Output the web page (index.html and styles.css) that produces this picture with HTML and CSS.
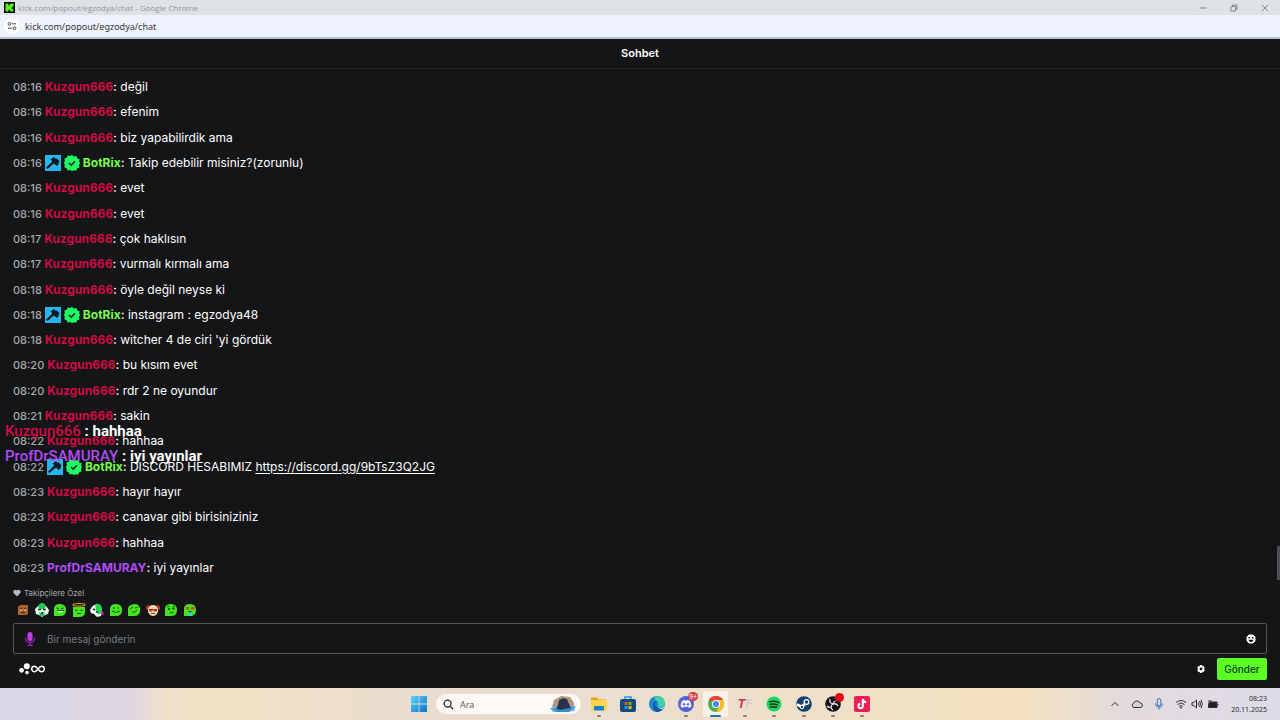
FILE: index.html
```html
<!DOCTYPE html>
<html lang="tr">

<head>
  <meta charset="UTF-8">
  <meta name="viewport" content="width=device-width, initial-scale=1.0">
  <title>kick.com/popout/egzodya/chat</title>
  <link rel="stylesheet" href="styles.css">
</head>

<body>
  <svg class="sprite">
    <symbol id="hammer" viewBox="0 0 16 16">
      <path fill="#27b5ef" d="M0 0h16v16H0z" />
      <path fill="#101b20" d="M5.500 4.500L9 2l1.500 1.800L12 3.500l2.500 3-1 1 .5 1.500-2.500 2-2-2.300-1.200.3-5.800 5L1 12.500 6.800 7l.2-1.200z" />
    </symbol>
    <symbol id="verified" viewBox="0 0 16 16">
      <path fill="#1efb65" d="M8 0l2 1.500 2.400-.4.9 2.300 2.300.9-.4 2.300L16 8l-1 2 .5 2.400-2.300.9-.9 2.300-2.300-.3L8 16l-2-.9-2.400.4-.9-2.300-2.300-.9.4-2.300L0 8l.9-2-.5-2.400 2.300-.8.9-2.300L6 1z" />
      <path fill="none" stroke="#101b20" stroke-width="1.600" d="M5 8l2.200 2.200L11 6.200" />
    </symbol>
  </svg>

  <div class="titlebar">
    <svg class="favicon" viewBox="0 0 11 11">
      <path d="M0 0h11v11H0z" />
      <path fill="#53fc18" d="M1.500 1.500h3V3.500h1V2.500h1v-1h3v3h-1v1h-1v1h1v1h1v2h-3v-1h-1v-1h-1v2h-3z" />
    </svg>
    <span class="title">kick.com/popout/egzodya/chat - Google Chrome</span>
    <div class="window-btns">
      <button aria-label="Simge durumuna küçült"><svg viewBox="0 0 8 8"><path d="M.5 4h7" /></svg></button>
      <button aria-label="Geri yükle"><svg viewBox="0 0 8 8"><path d="M1 2.500h4.500V7H1zM2.500 2.300V1H7v4.500H5.700" /></svg></button>
      <button aria-label="Kapat"><svg viewBox="0 0 8 8"><path d="M.8.8l6.400 6.400M7.200.8L.8 7.200" /></svg></button>
    </div>
  </div>
  <div class="urlbar">
    <span class="site-info">
      <svg viewBox="0 0 10 10"><circle cx="2.500" cy="2.800" r="1.400" /><path d="M5 2.800h4M1 7.200h4" /><circle cx="7.500" cy="7.200" r="1.400" /></svg>
    </span>
    <span>kick.com/popout/egzodya/chat</span>
  </div>

  <main class="chat">
    <h1 class="chat-header">Sohbet</h1>
    <div class="messages">
      <p class="msg"><time>08:16</time><b class="red">Kuzgun666</b><i>:</i> değil</p>
      <p class="msg"><time>08:16</time><b class="red">Kuzgun666</b><i>:</i> efenim</p>
      <p class="msg"><time>08:16</time><b class="red">Kuzgun666</b><i>:</i> biz yapabilirdik ama</p>
      <p class="msg"><time>08:16</time><svg class="badge"><use href="#hammer" /></svg><svg class="badge"><use href="#verified" /></svg><b class="green">BotRix</b><i>:</i> Takip edebilir misiniz?(zorunlu)</p>
      <p class="msg"><time>08:16</time><b class="red">Kuzgun666</b><i>:</i> evet</p>
      <p class="msg"><time>08:16</time><b class="red">Kuzgun666</b><i>:</i> evet</p>
      <p class="msg"><time>08:17</time><b class="red">Kuzgun666</b><i>:</i> çok haklısın</p>
      <p class="msg"><time>08:17</time><b class="red">Kuzgun666</b><i>:</i> vurmalı kırmalı ama</p>
      <p class="msg"><time>08:18</time><b class="red">Kuzgun666</b><i>:</i> öyle değil neyse ki</p>
      <p class="msg"><time>08:18</time><svg class="badge"><use href="#hammer" /></svg><svg class="badge"><use href="#verified" /></svg><b class="green">BotRix</b><i>:</i> instagram : egzodya48</p>
      <p class="msg"><time>08:18</time><b class="red">Kuzgun666</b><i>:</i> witcher 4 de ciri 'yi gördük</p>
      <p class="msg"><time>08:20</time><b class="red">Kuzgun666</b><i>:</i> bu kısım evet</p>
      <p class="msg"><time>08:20</time><b class="red">Kuzgun666</b><i>:</i> rdr 2 ne oyundur</p>
      <p class="msg"><time>08:21</time><b class="red">Kuzgun666</b><i>:</i> sakin</p>
      <p class="msg"><time>08:22</time><b class="red">Kuzgun666</b><i>:</i> hahhaa</p>
      <p class="msg"><time>08:22</time><svg class="badge"><use href="#hammer" /></svg><svg class="badge"><use href="#verified" /></svg><b class="green">BotRix</b><i>:</i> DISCORD HESABIMIZ <a href="https://discord.gg/9bTsZ3Q2JG">https://discord.gg/9bTsZ3Q2JG</a></p>
      <p class="msg"><time>08:23</time><b class="red">Kuzgun666</b><i>:</i> hayır hayır</p>
      <p class="msg"><time>08:23</time><b class="red">Kuzgun666</b><i>:</i> canavar gibi birisiniziniz</p>
      <p class="msg"><time>08:23</time><b class="red">Kuzgun666</b><i>:</i> hahhaa</p>
      <p class="msg"><time>08:23</time><b class="purple">ProfDrSAMURAY</b><i>:</i> iyi yayınlar</p>
      <span class="scroll-thumb"></span>
    </div>

    <!-- stream overlay, floats over the chat -->
    <div class="overlay">
      <p><span class="red">Kuzgun666</span> : hahhaa</p>
      <p><span class="purple">ProfDrSAMURAY</span> : iyi yayınlar</p>
    </div>

    <div class="chat-footer">
      <div class="mode">
        <svg viewBox="0 0 8 8"><path fill="#b4b8ba" d="M4 7.500L.8 4.200C-.8 2 2 -.8 4 1.500 6-.8 8.800 2 7.200 4.200z" /></svg>
        Takipçilere Özel
      </div>
      <div class="emotes">
        <button aria-label="emote 1"><svg viewBox="0 0 14 14"><path fill="#a9652b" d="M2 4l2-2h8v9l-2 1H2z" /><path stroke="#3b1d0a" d="M4 5l2 1M10 5L8 6M5 9.500h4" /><path fill="#efd4b4" d="M4 6.500h2v1H4zM8 6.500h2v1H8z" /></svg></button>
        <button aria-label="emote 2"><svg viewBox="0 0 14 14"><path fill="#e9fbef" d="M0 6l3-3 4-2 4 2 3 4-1 4-3 1-3 2-3-2-3-1z" /><path fill="#22c758" d="M3 4q1-4 4-4t4 4L9 6H5zM4 9.500h6L9 13H5z" /><path stroke="#12351c" stroke-width="1.500" d="M3 6.500h3M8 6.500h3M6 10h2" /></svg></button>
        <button aria-label="emote 3"><svg viewBox="0 0 14 14"><path fill="#45e51d" d="M1 13V6q0-5 6-5t6 6-6 6z" /><path fill="#d8ffd0" d="M4 7.500h7q-1 2-3.500 2T4 7.500z" /><path stroke="#14570a" d="M3 5l3 .5M11 5L8 5.500M4 7.500h7" /></svg></button>
        <button aria-label="emote 4"><svg viewBox="0 0 14 14"><path fill="#45e51d" d="M1 4h12v5q0 5-6 5H1z" /><ellipse cx="7" cy="1.800" rx="6.500" ry="1.300" fill="none" stroke="#f5a623" /><path fill="none" stroke="#14570a" d="M3 7q1.500 1 3 0M8 7q1.500 1 3 0M5 10.500h4" /></svg></button>
        <button aria-label="emote 5"><svg viewBox="0 0 14 14"><path fill="#e9fbef" d="M0 7q1-3 4-5l5 0 3 5-1 6-4 1-3-3-3-1z" /><path fill="#22d458" d="M5 1q6-1 7 4v4q-2 3-4 2L6 7z" /><path stroke="#12351c" stroke-width="1.500" d="M3 6l2 1M6 9h2" /><path fill="#d12bb9" d="M11 9h2.500v3H11z" /></svg></button>
        <button aria-label="emote 6"><svg viewBox="0 0 14 14"><path fill="#45e51d" d="M1 13V6q0-5 6-5t6 6-6 6z" /><path fill="none" stroke="#14570a" d="M4 5h2M8 5h2M3 8q4 3 8 0" /></svg></button>
        <button aria-label="emote 7"><svg viewBox="0 0 14 14"><path fill="#45e51d" d="M1 13V6q0-3 3-4 7-3 9 3 1 8-6 8z" /><path fill="none" stroke="#14570a" d="M3 6l3-2M8 5l3-1M5 9q3 1 5-2" /></svg></button>
        <button aria-label="emote 8"><svg viewBox="0 0 14 14"><path fill="#f6dfb5" d="M2 4q5-4 10 0v5q-2 4-5 4T2 9z" /><path fill="#c73b23" d="M0 4l2-2 2 1-2 3-2 1zM14 4l-2-2-2 1 2 3 2 1zM3 6h3.500v2.500H3zM7.500 6H11v2.500H7.500z" /><path stroke="#a3271b" d="M3 6.500h8M5 10.500h4" /></svg></button>
        <button aria-label="emote 9"><svg viewBox="0 0 14 14"><path fill="#45e51d" d="M1 13V6q0-5 6-5t6 6-6 6z" /><circle cx="5" cy="6" r="1.200" fill="#14570a" /><circle cx="9.500" cy="5.500" r="1.200" fill="#14570a" /><path fill="none" stroke="#14570a" d="M3 4l2-1M9 3l2 .5M6 10q2-2 4 0" /></svg></button>
        <button aria-label="emote 10"><svg viewBox="0 0 14 14"><path fill="#45e51d" d="M1 13V6q0-5 6-5t6 6-6 6z" /><path fill="#d8402c" d="M3 4h3v2.500H3zM8 4h3.500v2.500H8z" /><path fill="#1c4f12" d="M5.500 8h3v1.500h-3z" /><path fill="#46c8f2" d="M6 9.500h3V13H6z" /></svg></button>
      </div>
      <div class="composer">
        <svg class="mic" viewBox="0 0 12 14"><rect x="3.500" y="0" width="5" height="9" rx="2.500" fill="#c13be5" /><path fill="none" stroke="#8c1fb0" stroke-width="1.400" d="M1.500 5.500q0 5 4.500 5t4.500-5M6 10.500V13M3.500 13.200h5" /></svg>
        <input type="text" aria-label="Mesaj" placeholder="Bir mesaj gönderin">
        <button aria-label="Emojiler"><svg viewBox="0 0 10 10"><path fill="#fff" d="M3 1h4l2 2v4L7 9H3L1 7V3z" stroke="#fff" stroke-linejoin="round" /><path fill="#141517" d="M2.500 3h1.600v1.500H2.500zM5.900 3h1.600v1.500H5.900zM2.500 5.700h5Q7 8 5 8T2.500 5.700z" /></svg></button>
      </div>
      <div class="actions">
        <svg class="points" viewBox="0 0 12 12"><circle cx="7.800" cy="3.200" r="3" fill="#fff" /><circle cx="2.500" cy="7.300" r="2.400" fill="#fff" /><circle cx="8" cy="9.600" r="1.800" fill="#fff" /></svg>
        <svg class="infinity" viewBox="0 0 14 8"><path fill="none" stroke="#fff" stroke-width="1.500" d="M7 4C5.500 2 4.800 1.200 3.500 1.200a2.800 2.800 0 0 0 0 5.600C4.800 6.800 5.500 6 7 4s2.200-2.800 3.500-2.800a2.800 2.800 0 0 1 0 5.600C9.200 6.800 8.500 6 7 4z" /></svg>
        <button class="settings" aria-label="Ayarlar"><svg viewBox="0 0 10 10"><path fill="#fff" fill-rule="evenodd" d="M4 1h2l.4 1.200 1.200-.3 1.100 1.800L8 5l.7 1.300-1.100 1.800-1.200-.3L6 9H4l-.4-1.200-1.200.3-1.100-1.800L2 5l-.7-1.300 1.100-1.800 1.200.3zM5 3.600a1.400 1.400 0 1 0 0 2.800 1.400 1.400 0 0 0 0-2.800z" /></svg></button>
        <button class="send">Gönder</button>
      </div>
    </div>
  </main>

  <footer class="taskbar">
    <div class="dock">
      <button class="start" aria-label="Başlat"><svg viewBox="0 0 16 16"><defs><linearGradient id="win" x2="1" y2="1"><stop stop-color="#5fd2f7" /><stop offset="1" stop-color="#0873cd" /></linearGradient></defs><path fill="url(#win)" d="M0 0h7.600v7.600H0zM8.400 0H16v7.600H8.400zM0 8.400h7.600V16H0zM8.400 8.400H16V16H8.400z" /></svg></button>
      <label class="search">
        <svg class="lens" viewBox="0 0 12 12"><circle cx="5" cy="5" r="3.800" /><path d="M8 8l3 3.200" /></svg>
        <input type="text" aria-label="Ara" placeholder="Ara">
        <svg class="hat" viewBox="0 0 28 18"><path fill="#b4967c" d="M3 12L5 5l7-4 9 1 4 6v5z" /><path fill="#64b6e7" d="M1 13l8-2 10 1 8-1-2 5-9 1H4z" /><path fill="#263451" d="M7 14l2-4 1-5 4-2 4 1 2 5 2 4-7 3z" /><path fill="#3a89c6" d="M2 13l9 2 14-3-5 5H8z" /></svg>
      </label>
      <div class="apps">
        <button class="app open" aria-label="Dosya Gezgini"><svg viewBox="0 0 16 16"><path fill="#e3a31b" d="M0 1.500h6L8 3.500h7V8H0z" /><path fill="#ffd34d" d="M0 4h16v10.500H0z" /><path fill="#1780c8" d="M3 10h10v4.500H3z" /></svg></button>
        <button class="app" aria-label="Store"><svg viewBox="0 0 16 16"><path fill="none" stroke="#2196dd" stroke-width="1.500" d="M5 4V1h6v3" /><rect y="3" width="16" height="13" rx="2" fill="#144b7c" /><path fill="#f25022" d="M4.500 6h3v3h-3z" /><path fill="#7fba00" d="M8.500 6h3v3h-3z" /><path fill="#00a4ef" d="M4.500 10h3v3h-3z" /><path fill="#ffb900" d="M8.500 10h3v3h-3z" /></svg></button>
        <button class="app" aria-label="Edge"><svg viewBox="0 0 16 16"><circle cx="8" cy="8" r="8" fill="#168bd2" /><path fill="#3fd3a0" d="M5 1q8-3 11 6 0 4-4 4-3 0-3-2 1-2-1-4Q6 4 5 1z" /><path fill="#0c59a4" d="M4 9q0-4 4-4-3 3-.5 6 3 2 7 1-3 4-7 4-4-2-3.500-7z" /><path fill="#f0e2cd" d="M9.200 9q-.5 2.500 2.500 3 2.500 0 4-2L14.500 12.200q-1 .8-2.500.8-3.500-.5-2.800-4z" /></svg></button>
        <button class="app open" aria-label="Discord"><svg viewBox="0 0 16 16"><circle cx="8" cy="8" r="8" fill="#5560dc" /><path fill="#fff" d="M4.500 4.500L7 4l.4.700h1.200L9 4l2.500.5q2 3 1.700 6.200L11 12l-.8-1.200H5.800L5 12l-2.200-1.300q-.3-3.200 1.700-6.200z" /><circle cx="6" cy="8.200" r="1.200" fill="#5560dc" /><circle cx="10" cy="8.200" r="1.200" fill="#5560dc" /></svg><span class="count">9+</span></button>
        <button class="app open active" aria-label="Chrome"><svg viewBox="0 0 16 16"><circle cx="8" cy="8" r="8" fill="#4caf50" /><path fill="#ea4335" d="M8 8L1.100 4A8 8 0 0 1 14.900 4z" /><path fill="#fbc116" d="M8 8V4h6.900A8 8 0 0 1 8 16l3.500-6z" /><circle cx="8" cy="8" r="4" fill="#fff" /><circle cx="8" cy="8" r="3" fill="#4285f4" /></svg></button>
        <button class="app open" aria-label="TF"><span class="tf">T<em>F</em></span></button>
        <button class="app open" aria-label="Spotify"><svg viewBox="0 0 16 16"><circle cx="8" cy="8" r="7.500" fill="#1ed760" /><path fill="none" stroke="#10351c" stroke-width="1.500" stroke-linecap="round" d="M3.500 5.800q5-1.500 9.200.8M4 8.500q4-1.200 7.600.7M4.500 11q3.500-.8 6.200.5" /></svg></button>
        <button class="app open" aria-label="Steam"><svg viewBox="0 0 16 16"><circle cx="8" cy="8" r="7.800" fill="#173f6e" /><path stroke="#fff" stroke-width="3" d="M.8 8.500l5 2.300 4.700-4.300" fill="none" /><circle cx="10.500" cy="6" r="3" fill="#fff" /><circle cx="10.500" cy="6" r="1.700" fill="#173f6e" /><circle cx="6" cy="11" r="2.200" fill="#fff" /><circle cx="6" cy="11" r="1.200" fill="#173f6e" /></svg></button>
        <button class="app open" aria-label="OBS"><svg viewBox="0 0 16 16"><circle cx="8" cy="8" r="7.800" fill="#151317" /><g fill="none" stroke="#e8e2e5" stroke-width="1.300"><path d="M5 3q-1 4 3 5 4-1 5 2" /><path d="M8 8q-2 1-2 3 0 2 2 3M8 8q0-2 2.500-3M2 10q2 2 4 1" /></g></svg><span class="rec"></span></button>
        <button class="app open" aria-label="TikTok"><svg viewBox="0 0 16 16"><rect width="16" height="16" rx="2" fill="#ea2057" /><path fill="none" stroke="#fff" stroke-width="2" d="M8.800 3v7a2.200 2.200 0 1 1-2.500-2.200M8.800 3q.4 3 3.400 3.200" /></svg></button>
      </div>
    </div>
    <div class="tray">
      <svg class="chevron" viewBox="0 0 12 12"><path d="M2.500 8L6 4.500 9.500 8" /></svg>
      <svg class="cloud" viewBox="0 0 12 12"><path fill="#d3d3d8" d="M3 9.500a2.200 2.200 0 0 1-.2-4.300A3.300 3.300 0 0 1 9 5a2.200 2.200 0 0 1 .3 4.500z" /></svg>
      <svg class="tray-mic" viewBox="0 0 12 12"><rect x="4.200" y=".6" width="3.600" height="7" rx="1.800" /><path d="M2.500 5.500q0 3.800 3.500 3.800t3.500-3.800M6 9.300v2.200" /></svg>
      <div class="tray-group">
        <svg viewBox="0 0 12 12"><path d="M1 4.500q5-4 10 0M2.500 6.500q3.500-3 7 0M4.200 8.300q1.800-1.400 3.600 0" /><circle cx="6" cy="9.700" r=".6" /></svg>
        <svg viewBox="0 0 12 12"><path d="M1 4.500h1.800L5.500 2v8L2.800 7.500H1zM7 4.500q1 1.500 0 3M8.500 3q2 3 0 6M10 1.800q2.700 4.200 0 8.400" /></svg>
        <svg viewBox="0 0 12 12"><path fill="#222" d="M3 4h7v5.500H1.500V6zM11 6v1.500M2 2v3M4 2v3" /></svg>
      </div>
      <div class="clock"><span>08:23</span><span>20.11.2025</span></div>
    </div>
  </footer>
</body>

</html>
```
FILE: styles.css
```css
* {
  box-sizing: border-box;
}

body {
  margin: 0;
  height: 100vh;
  display: flex;
  flex-direction: column;
  overflow: hidden;
  background: #141517;
  color: #fff;
  font-family: Inter, "Noto Sans", sans-serif;
}

p,
h1 {
  margin: 0;
}

svg {
  display: block;
  flex: none;
}

button {
  padding: 0;
  border: none;
  background: none;
  font-family: inherit;
  cursor: pointer;
}

input {
  min-width: 0;
  padding: 0;
  border: none;
  outline: none;
  background: none;
  font-family: inherit;
}

.sprite {
  position: absolute;
  width: 0;
  height: 0;
}

.red {
  color: #cf0a45;
}

.green {
  color: #75fd46;
}

.purple {
  color: #b04cf5;
}

/* browser window */
.titlebar {
  height: 15px;
  display: flex;
  align-items: center;
  padding: 0 11px 0 4px;
  background: #dee1e6;
  color: #92969b;
  font-family: "Open Sans", sans-serif;
  font-size: 8px;
}

.favicon {
  width: 11px;
  height: 11px;
  margin-right: 3px;
}

.window-btns {
  display: flex;
  gap: 23px;
  margin-left: auto;
}

.window-btns svg {
  width: 8px;
  height: 8px;
  fill: none;
  stroke: #85888c;
}

.urlbar {
  height: 24px;
  display: flex;
  align-items: center;
  gap: 5px;
  padding: 0 4px;
  background: #edf2fc;
  border-bottom: 2px solid #b6c3d0;
  color: #35383c;
  font-family: "Noto Sans", sans-serif;
  font-size: 9px;
}

.site-info {
  padding: 3px;
  border-radius: 50%;
  background: #fff;
}

.site-info svg {
  width: 10px;
  height: 10px;
  fill: none;
  stroke: #45494e;
}

/* chat */
.chat {
  position: relative;
  flex: 1;
  min-height: 0;
  display: flex;
  flex-direction: column;
}

.chat-header {
  height: 30px;
  border-bottom: 1px solid #25282b;
  font-size: 11px;
  line-height: 29px;
  font-weight: 600;
  text-align: center;
}

.messages {
  position: relative;
  flex: 1;
  display: flex;
  flex-direction: column;
  justify-content: space-between;
  padding: 8px 13px 9px;
}

.msg {
  display: flex;
  align-items: center;
  font-size: 12px;
  line-height: 20px;
  white-space: pre;
}

.msg time {
  margin-right: 3px;
  color: #a4a9ab;
  font-size: 11px;
  font-weight: 500;
}

.msg b {
  font-weight: 700;
}

.msg i {
  font-style: normal;
  font-weight: 600;
}

.msg a {
  color: #fff;
  text-underline-offset: 2px;
}

.badge {
  width: 16px;
  height: 16px;
  margin-right: 3px;
}

.scroll-thumb {
  position: absolute;
  right: 0;
  bottom: 7px;
  width: 3px;
  height: 34px;
  background: #4b4d50;
}

.overlay {
  position: absolute;
  left: 5px;
  top: 380px;
  font-family: Roboto, sans-serif;
  font-size: 15px;
  line-height: 25px;
  font-weight: 700;
}

.overlay span {
  font-weight: 500;
}

.chat-footer {
  padding: 0 13px 8px;
}

.mode {
  display: flex;
  align-items: center;
  gap: 3px;
  color: #a7abad;
  font-size: 8px;
  line-height: 12px;
}

.mode svg {
  width: 8px;
  height: 8px;
}

.emotes {
  width: 187px;
  display: flex;
  justify-content: space-between;
  padding: 4px 3px 6px;
}

.emotes svg {
  width: 14px;
  height: 14px;
  fill: none;
}

.composer {
  height: 31px;
  display: flex;
  align-items: center;
  padding: 0 10px;
  border: 1px solid #55585b;
  border-radius: 2px;
}

.mic {
  width: 12px;
  height: 14px;
}

.composer input {
  flex: 1;
  margin-left: 11px;
  color: #fff;
  font-size: 10px;
}

.composer input::placeholder {
  color: #777c80;
}

.composer button svg,
.settings svg {
  width: 10px;
  height: 10px;
}

.actions {
  display: flex;
  align-items: center;
  padding: 4px 0 0 6px;
}

.points {
  width: 12px;
  height: 12px;
}

.infinity {
  width: 14px;
  height: 8px;
}

.settings {
  margin-left: auto;
  margin-right: 11px;
}

.send {
  width: 50px;
  height: 22px;
  border-radius: 2px;
  background: #5bfd24;
  color: #123b08;
  font-size: 10px;
  font-weight: 500;
}

/* windows taskbar */
.taskbar {
  position: relative;
  height: 32px;
  display: flex;
  align-items: center;
  justify-content: center;
  background: linear-gradient(90deg, #dad8e6 0, #ded6e3 10%, #efe0c8 13%, #f1e3c5 18%, #eadccd 30%, #e9dcd3 40%, #efe0c8 63%, #f2e2c0 80%, #e3dadd 88%, #dddbe8 100%);
  font-family: "Noto Sans", sans-serif;
}

.dock {
  display: flex;
  align-items: center;
  padding-left: 6px;
}

.start {
  margin-right: 9px;
}

.start svg,
.app svg {
  width: 16px;
  height: 16px;
}

.search {
  width: 145px;
  height: 20px;
  display: flex;
  align-items: center;
  gap: 6px;
  margin-right: 5px;
  padding: 0 4px 0 7px;
  border-radius: 10px;
  background: #fcf8f3;
}

.search input {
  flex: 1;
  font-size: 9px;
}

.search input::placeholder {
  color: #65615f;
}

.lens {
  width: 11px;
  height: 11px;
  fill: none;
  stroke: #252525;
  stroke-width: 1.4;
}

.hat {
  width: 28px;
  height: 18px;
}

.apps {
  width: 289px;
  display: flex;
  justify-content: space-between;
}

.app {
  position: relative;
  width: 25px;
  height: 26px;
  display: flex;
  align-items: center;
  justify-content: center;
  border-radius: 2px;
}

.app.open::after {
  content: "";
  position: absolute;
  bottom: 0;
  width: 4px;
  height: 2px;
  border-radius: 1px;
  background: #877e76;
}

.app.active {
  background: #f9f0e5;
}

.app.active::after {
  width: 11px;
  background: #1979bd;
}

.count {
  position: absolute;
  top: 1px;
  right: 1px;
  padding: 0 1px;
  border-radius: 5px;
  background: #d3424d;
  color: #fff;
  font-size: 7px;
  line-height: 9px;
}

.rec {
  position: absolute;
  top: 2px;
  right: 2px;
  width: 9px;
  height: 9px;
  border-radius: 50%;
  background: #e40816;
}

.tf {
  color: #c33543;
  font: italic 700 12px "Liberation Sans", sans-serif;
}

.tf em {
  color: #d4ccd3;
}

.tray {
  position: absolute;
  right: 13px;
  top: 0;
  height: 32px;
  display: flex;
  align-items: center;
  gap: 10px;
}

.tray svg {
  width: 12px;
  height: 12px;
  fill: none;
  stroke: #303036;
}

.tray .tray-mic {
  stroke: #2d6fb5;
}

.tray-group {
  display: flex;
  gap: 4px;
}

.clock {
  min-width: 38px;
  display: flex;
  flex-direction: column;
  align-items: flex-end;
  color: #29292d;
  font-size: 7px;
  line-height: 11px;
}
```
